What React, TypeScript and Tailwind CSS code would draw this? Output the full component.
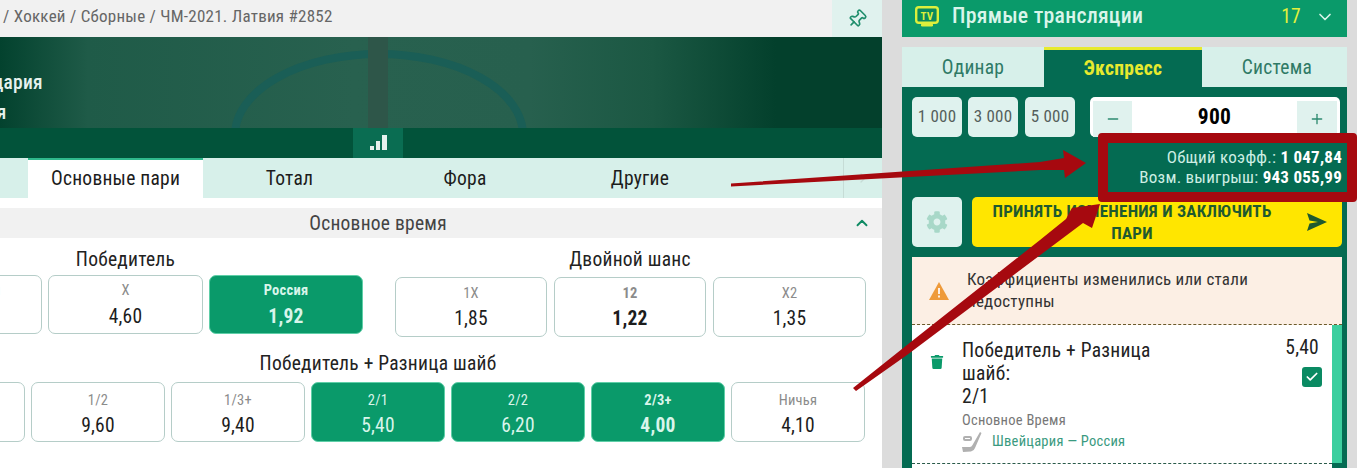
import { ChevronDown, ChevronRight, ChevronUp, Pin, Minus, Plus, Check } from 'lucide-react';
import { FaCog, FaTrash } from 'react-icons/fa';

interface OddProps {
  w: string;
  label: string;
  value: string;
  top: string;
  gap: string;
  on?: boolean;
  bold?: boolean;
  labelBold?: boolean;
}

function Odd({ w, label, value, top, gap, on, bold, labelBold }: OddProps) {
  return (
    <div
      className={`${w} ${top} shrink-0 rounded-[7px] border flex flex-col items-center ${
        on ? 'bg-[#0a9a6a] border-[#5fcfa8] text-[#d9f5ea]' : 'bg-white border-[#b5cdc8] text-[#1c1c1c]'
      }`}
    >
      <span className={`text-[14.5px] leading-[18px] ${labelBold ? 'font-bold' : ''} ${on ? 'text-[#d9f5ea]' : 'text-[#8b8b8b]'}`}>{label}</span>
      <span className={`text-[19.5px] leading-[24px] ${gap} ${bold ? 'font-bold' : ''}`}>{value}</span>
    </div>
  );
}

function Hero() {
  return (
    <div className="relative h-[91px] bg-[linear-gradient(90deg,#03422e_0%,#1f5b48_10%,#28614f_40%,#27604e_60%,#1b5843_74%,#03402c_88%,#03402c_100%)] overflow-hidden">
      <svg className="absolute left-0 top-0" width="882" height="91" viewBox="0 0 882 91">
        <ellipse cx="379" cy="98" rx="144" ry="81" fill="none" stroke="#1a5e56" strokeWidth="8" />
        <rect x="368" y="0" width="20" height="91" fill="#2e5649" />
      </svg>
      <div className="relative -ml-[53px] pt-[31px] text-[19.5px] leading-[30px] font-medium text-[#e6f2ee]">
        <div>Швейцария</div>
        <div>Россия</div>
      </div>
    </div>
  );
}

function LeftColumn() {
  return (
    <div className="w-[882px] shrink-0 bg-white overflow-hidden">
      <div className="h-[37px] bg-[#f1f1f1] flex items-center justify-between">
        <span className="pl-[3px] pb-[3px] text-[17px] text-[#666666]">/ Хоккей / Сборные / ЧМ-2021. Латвия #2852</span>
        <div className="w-[50px] h-[37px] bg-[#e0f2ee] flex items-center justify-center">
          <Pin size={20} strokeWidth={2} className="text-[#1f8e6c] rotate-45" />
        </div>
      </div>
      <Hero />
      <div className="h-[30px] bg-[#02533a] flex pl-[353px]">
        <div className="w-[50px] h-[30px] bg-[#0a6d52] flex items-end justify-center gap-[2px] pb-[8px]">
          <span className="w-[4px] h-[4px] bg-[#e6f2ee]" />
          <span className="w-[4px] h-[9px] bg-[#e6f2ee]" />
          <span className="w-[5px] h-[15px] bg-[#e6f2ee]" />
        </div>
      </div>
      <div className="h-[40px] bg-[#d7f0ea] flex items-center text-[19.5px] text-[#1c1c1c]">
        <div className="w-[28px]" />
        <div className="w-[175px] h-[40px] bg-white border-t-2 border-[#2fb98c] flex items-center justify-center">Основные пари</div>
        <div className="w-[173px] pt-[1px] text-center">Тотал</div>
        <div className="w-[150px] pt-[1px] ml-[14px] text-center">Фора</div>
        <div className="w-[150px] pt-[1px] ml-[25px] text-center">Другие</div>
        <div className="ml-[128px] w-[39px] h-[40px] border-l border-[#c6dcd6] flex items-center justify-center text-[#c6dcd6]">
          <ChevronRight size={16} />
        </div>
      </div>
      <div className="mt-[10px] h-[30px] bg-[#f1f1f1] flex items-center text-[19.5px] text-[#444444]">
        <span className="w-[756px] pt-[2px] text-center">Основное время</span>
        <ChevronUp size={18} strokeWidth={2.5} className="ml-[97px] text-[#0f8a63]" />
      </div>
      <div className="flex">
        <div className="ml-[-112px] w-[475px]">
          <div className="h-[37px] text-center text-[19.5px] leading-[44px] text-[#222222]">Победитель</div>
          <div className="flex gap-[6px] h-[59px]">
            <Odd w="w-[154px]" top="pt-[6px]" gap="mt-[5px]" label="Швейцария" value="4,10" />
            <Odd w="w-[155px]" top="pt-[6px]" gap="mt-[5px]" label="X" value="4,60" />
            <Odd w="w-[154px]" top="pt-[6px]" gap="mt-[5px]" on bold labelBold label="Россия" value="1,92" />
          </div>
        </div>
        <div className="ml-[32px] w-[470px]">
          <div className="h-[39px] text-center text-[19.5px] leading-[44px] text-[#222222]">Двойной шанс</div>
          <div className="flex gap-[7px] h-[60px]">
            <Odd w="w-[152px]" top="pt-[7px]" gap="mt-[4px]" label="1X" value="1,85" />
            <Odd w="w-[152px]" top="pt-[7px]" gap="mt-[4px]" label="12" value="1,22" bold labelBold />
            <Odd w="w-[153px]" top="pt-[7px]" gap="mt-[4px]" label="X2" value="1,35" />
          </div>
        </div>
      </div>
      <div className="w-[756px] pt-[7px] text-center text-[19.5px] leading-[40px] h-[45px] text-[#222222]">Победитель + Разница шайб</div>
      <div className="flex justify-end pr-[17px] gap-[6px] h-[60px]">
        <Odd w="w-[134px]" top="pt-[9px]" gap="mt-[4px]" label="1/1" value="5,20" />
        <Odd w="w-[134px]" top="pt-[9px]" gap="mt-[4px]" label="1/2" value="9,60" />
        <Odd w="w-[134px]" top="pt-[9px]" gap="mt-[4px]" label="1/3+" value="9,40" />
        <Odd w="w-[134px]" top="pt-[9px]" gap="mt-[4px]" on label="2/1" value="5,40" />
        <Odd w="w-[134px]" top="pt-[9px]" gap="mt-[4px]" on label="2/2" value="6,20" />
        <Odd w="w-[134px]" top="pt-[9px]" gap="mt-[4px]" on bold labelBold label="2/3+" value="4,00" />
        <Odd w="w-[134px]" top="pt-[9px]" gap="mt-[4px]" label="Ничья" value="4,10" />
      </div>
    </div>
  );
}

function TvIcon() {
  return (
    <svg width="24" height="21" viewBox="0 0 24 21">
      <rect x="1.2" y="1.2" width="21.6" height="15.6" rx="2.500" fill="#0a8a5e" stroke="#dcef3c" strokeWidth="2.400" />
      <rect x="6" y="17.500" width="12" height="3" rx="1.200" fill="#dcef3c" />
      <text x="12" y="13.500" textAnchor="middle" fontSize="11" fontWeight="700" fill="#dcef3c" fontFamily="Roboto, sans-serif">TV</text>
    </svg>
  );
}

function StickIcon() {
  return (
    <svg width="20" height="20" viewBox="0 0 20 20">
      <rect x="1" y="4" width="9" height="5" rx="2" fill="#b0b0b0" />
      <rect x="3" y="6" width="5" height="1" fill="#ffffff" />
      <path d="M18 0 L19.500 1 L13 16 Q12 19 9 19.500 L1 20 L0 15 L8 15 Q9.500 15 10.500 13 Z" fill="#b0b0b0" />
    </svg>
  );
}

function RightColumn() {
  return (
    <div className="w-[445px] shrink-0 ml-[20px]">
      <div className="h-[37px] bg-[#0a9a6a] flex items-center pl-[13px] pr-[12px] pb-[4px] text-[#d9f5ea]">
        <TvIcon />
        <span className="ml-[13px] text-[21.8px] font-medium">Прямые трансляции</span>
        <span className="ml-auto text-[19.5px] text-[#e3f03c]">17</span>
        <ChevronDown size={20} strokeWidth={2} className="ml-[14px]" />
      </div>
      <div className="mt-[10px] bg-[#046b52] pb-[20px]">
        <div className="flex h-[40px] text-[19.5px] text-[#2f7a66]">
          <div className="w-[142px] pt-[1px] bg-[#d7f0ea] flex items-center justify-center">Одинар</div>
          <div className="w-[158px] pt-[1px] bg-[#046b52] border-t-[3px] border-[#e7ea2e] flex items-center justify-center font-bold text-[#e7ea2e]">Экспресс</div>
          <div className="w-[145px] pt-[1px] pl-[5px] bg-[#d7f0ea] flex items-center justify-center">Система</div>
        </div>
        <div className="px-[10px] pt-[10px] flex">
          <div className="flex shrink-0 text-[#555f5c] text-[17px]">
            <div className="w-[50px] h-[40px] rounded-[5px] bg-[#dff2ee] flex items-center justify-center">1 000</div>
            <div className="ml-[6px] w-[50px] h-[40px] rounded-[5px] bg-[#dff2ee] flex items-center justify-center">3 000</div>
            <div className="ml-[7px] w-[50px] h-[40px] rounded-[5px] bg-[#dff2ee] flex items-center justify-center">5 000</div>
          </div>
          <div className="ml-[15px] w-[250px] shrink-0 h-[40px] rounded-[5px] bg-white flex pt-[4px] px-[3px]">
            <div className="w-[39px] h-[36px] bg-[#e0f2ee] flex items-center justify-center text-[#2d8a70]"><Minus size={16} strokeWidth={2} /></div>
            <div className="flex-1 text-center text-[21.5px] font-bold text-black leading-[32px]">900</div>
            <div className="w-[40px] h-[36px] bg-[#e0f2ee] flex items-center justify-center text-[#2d8a70]"><Plus size={16} strokeWidth={2} /></div>
          </div>
        </div>
        <div className="h-[60px] pt-[10px] pr-[5px] text-right text-[17px] leading-[20px] text-[#cdeee3]">
          <div>Общий коэфф.: <b className="text-white">1 047,84</b></div>
          <div>Возм. выигрыш: <b className="text-white">943 055,99</b></div>
        </div>
        <div className="px-[10px] pr-[5px] flex gap-[10px]">
          <div className="w-[50px] h-[50px] rounded-[5px] bg-[#dff2ee] flex items-center justify-center text-[#a8d8c8]"><FaCog size={22} /></div>
          <div className="w-[370px] h-[50px] rounded-[5px] bg-[#ffe600] flex items-center text-[#1f5a2f] font-bold text-[17px] leading-[22px]">
            <div className="w-[320px] px-[15px] text-center">ПРИНЯТЬ ИЗМЕНЕНИЯ И ЗАКЛЮЧИТЬ ПАРИ</div>
            <svg className="ml-[15px]" width="20" height="18" viewBox="0 0 20 18"><path d="M0 0 L20 9 L0 18 L2.500 10.500 L11 9 L2.500 7.500 Z" fill="#1f5a2f" /></svg>
          </div>
        </div>
        <div className="mt-[10px] ml-[10px] mr-[5px] h-[68px] bg-[#fcefe4] border-b border-dashed border-[#6b5a2a] flex items-center pl-[17px] text-[17px] leading-[22px] text-[#333333]">
          <svg className="shrink-0" width="20" height="18" viewBox="0 0 20 18">
            <path d="M10 0 L20 18 L0 18 Z" fill="#ee9a3a" />
            <rect x="9" y="6" width="2" height="6" fill="#fcefe4" />
            <rect x="9" y="13.500" width="2" height="2" fill="#fcefe4" />
          </svg>
          <div className="ml-[18px] w-[300px] -mt-[2px]">Коэффициенты изменились или стали недоступны</div>
        </div>
        <div className="ml-[10px] mr-[5px] h-[138px] bg-white border-r-[10px] border-[#3ccf9f] flex">
          <div className="w-[50px] pt-[30px] pl-[18px] text-[#0a9a6a]"><FaTrash size={14} /></div>
          <div className="pt-[14px] w-[240px]">
            <div className="text-[19.5px] leading-[23px] text-[#222222]">Победитель + Разница<br />шайб:<br />2/1</div>
            <div className="text-[14.5px] leading-[20px] mt-[3px] text-[#777777]">Основное Время</div>
            <div className="flex items-center">
              <StickIcon />
              <span className="ml-[10px] text-[14.5px] text-[#3a9a80]">Швейцария — Россия</span>
            </div>
          </div>
          <div className="ml-auto pr-[10px] pt-[11px] flex flex-col items-end">
            <div className="text-[19.5px] leading-[24px] text-[#222222] mr-[3px]">5,40</div>
            <div className="mt-[7px] w-[20px] h-[20px] rounded-[3px] bg-[#0a8a62] flex items-center justify-center text-white"><Check size={14} strokeWidth={3} /></div>
          </div>
        </div>
        <div className="ml-[10px] mr-[15px] border-t border-dashed border-[#2a5a4a] h-[5px] bg-white" />
      </div>
    </div>
  );
}

function Overlay() {
  return (
    <>
      <div className="absolute left-[1098px] top-[133px] w-[259px] h-[69px] rounded-[4px] border-[10px] border-[#a6090f] pointer-events-none" />
      <svg className="absolute left-0 top-0 pointer-events-none" width="1357" height="468" viewBox="0 0 1357 468">
        <polygon points="731,183.500 1040,162 1064,158 1063,150 1086,163 1065,178 1064,170 1040,170 731,186.500" fill="#a6090f" />
        <polygon points="853,388 907,345 1040,240 1066,219 1072,208 1100,204 1092,228 1083,223 1047,250 907,355 856,391" fill="#a6090f" />
      </svg>
    </>
  );
}

export default function App() {
  return (
    <div className="relative w-[1357px] h-[468px] overflow-hidden bg-[#dcdcdc] flex font-['Roboto',sans-serif] [font-stretch:85%] tracking-[0.25px]">
      <LeftColumn />
      <RightColumn />
      <Overlay />
    </div>
  );
}
